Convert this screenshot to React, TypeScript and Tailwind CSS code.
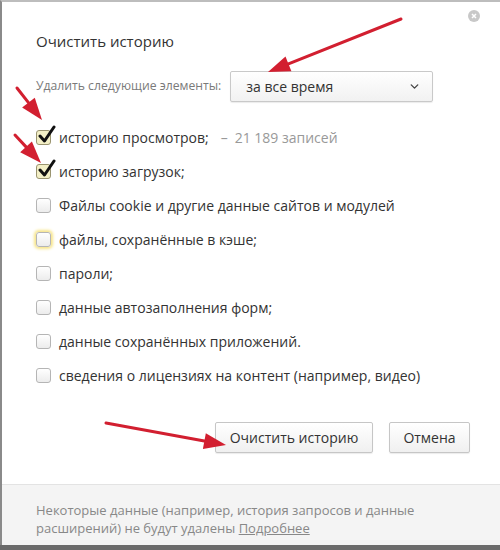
import { ChevronDown } from 'lucide-react';

const items = [
  { label: 'историю просмотров;', note: '21 189 записей', checked: true },
  { label: 'историю загрузок;', checked: true },
  { label: 'Файлы cookie и другие данные сайтов и модулей' },
  { label: 'файлы, сохранённые в кэше;', focused: true },
  { label: 'пароли;' },
  { label: 'данные автозаполнения форм;' },
  { label: 'данные сохранённых приложений.' },
  { label: 'сведения о лицензиях на контент (например, видео)' },
];

function Box({ checked, focused }: { checked?: boolean; focused?: boolean }) {
  return (
    <span
      className={`relative inline-block size-[15px] shrink-0 rounded-[3px] border ${
        checked
          ? 'border-[#9a9470] bg-[#f3efc6]'
          : 'border-[#b5b5b5] bg-gradient-to-b from-white to-[#ececec]'
      } ${focused ? 'shadow-[0_0_3px_2px_#f7e58a]' : ''}`}
    >
      {checked && (
        <svg className="absolute -top-[6px] left-[1px]" width="18" height="19" viewBox="0 0 18 19">
          <path d="M2 11 L6.5 16 L16 2" fill="none" stroke="#111" strokeWidth="3" strokeLinecap="round" strokeLinejoin="round" />
        </svg>
      )}
    </span>
  );
}

function Arrow({ x1, y1, x2, y2 }: { x1: number; y1: number; x2: number; y2: number }) {
  const a = Math.atan2(y2 - y1, x2 - x1);
  const len = 22;
  const w = 8;
  const bx = x2 - Math.cos(a) * len;
  const by = y2 - Math.sin(a) * len;
  const px = -Math.sin(a) * w;
  const py = Math.cos(a) * w;
  return (
    <g>
      <line x1={x1} y1={y1} x2={bx} y2={by} stroke="#d21f30" strokeWidth="3" strokeLinecap="round" />
      <polygon points={`${x2},${y2} ${bx + px},${by + py} ${bx - px},${by - py}`} fill="#d21f30" />
    </g>
  );
}

export default function App() {
  return (
    <div className="relative h-[550px] w-[500px] overflow-hidden bg-[#6b6b6b] font-['Open_Sans',sans-serif]">
      <div className="flex h-[545px] flex-col border-l-2 border-t-2 border-l-[#8a8a8a] border-t-[#bdbdbd] bg-white">
        {/* close */}
        <div className="relative">
          <span className="absolute right-[20px] top-[8px] flex size-[12px] items-center justify-center rounded-full bg-[#c8c8c8]">
            <svg width="6" height="6" viewBox="0 0 6 6">
              <path d="M1 1 L5 5 M5 1 L1 5" stroke="#fff" strokeWidth="1.5" />
            </svg>
          </span>
        </div>

        <div className="pl-[34px] pt-[28px] text-[15px] text-[#333]">Очистить историю</div>

        <div className="mt-[18px] flex items-center pl-[34px]">
          <span className="text-[12.2px] text-[#7a7a7a]">Удалить следующие элементы:</span>
          <div className="ml-[9px] flex h-[31px] w-[203px] items-center justify-between rounded-[2px] border border-[#c9c9c9] bg-gradient-to-b from-white to-[#f1f1f1] pl-[15px] pr-[11px] text-[14px] text-[#333] shadow-[0_1px_1px_rgba(0,0,0,0.08)]">
            <span>за все время</span>
            <ChevronDown size={13} strokeWidth={2.5} className="text-[#444]" />
          </div>
        </div>

        <div className="mt-[19px] flex flex-col pl-[34px]">
          {items.map((it) => (
            <div key={it.label} className="flex h-[34px] items-center gap-[8px] text-[14px] text-[#333]">
              <Box checked={it.checked} focused={it.focused} />
              <span className="flex items-center">
                {it.label}
                {it.note && (
                  <span className="ml-[12px] flex gap-[7px] text-[#999]">
                    <span>–</span>
                    <span>{it.note}</span>
                  </span>
                )}
              </span>
            </div>
          ))}
        </div>

        <div className="mt-[29px] flex justify-end gap-[16px] pr-[30px]">
          <button className="h-[31px] w-[158px] rounded-[2px] border border-[#c6c6c6] bg-gradient-to-b from-white to-[#f0f0f0] text-[14px] text-[#333] shadow-[0_1px_1px_rgba(0,0,0,0.08)]">
            Очистить историю
          </button>
          <button className="h-[31px] w-[81px] rounded-[2px] border border-[#c6c6c6] bg-gradient-to-b from-white to-[#f0f0f0] text-[14px] text-[#333] shadow-[0_1px_1px_rgba(0,0,0,0.08)]">
            Отмена
          </button>
        </div>

        <div className="mt-auto h-[61px] border-t border-[#e3e3e3] bg-[#f4f4f4] pl-[34px] pt-[16px] text-[13px] leading-[18px] text-[#888]">
          Некоторые данные (например, история запросов и данные
          <br />
          расширений) не будут удалены <span className="underline">Подробнее</span>
        </div>
      </div>

      <svg className="pointer-events-none absolute left-0 top-0" width="500" height="550">
        <Arrow x1={401} y1={19} x2={268} y2={72} />
        <Arrow x1={17} y1={88} x2={42} y2={120} />
        <Arrow x1={15} y1={135} x2={41} y2={163} />
        <Arrow x1={106} y1={423} x2={226} y2={445} />
      </svg>
    </div>
  );
}
